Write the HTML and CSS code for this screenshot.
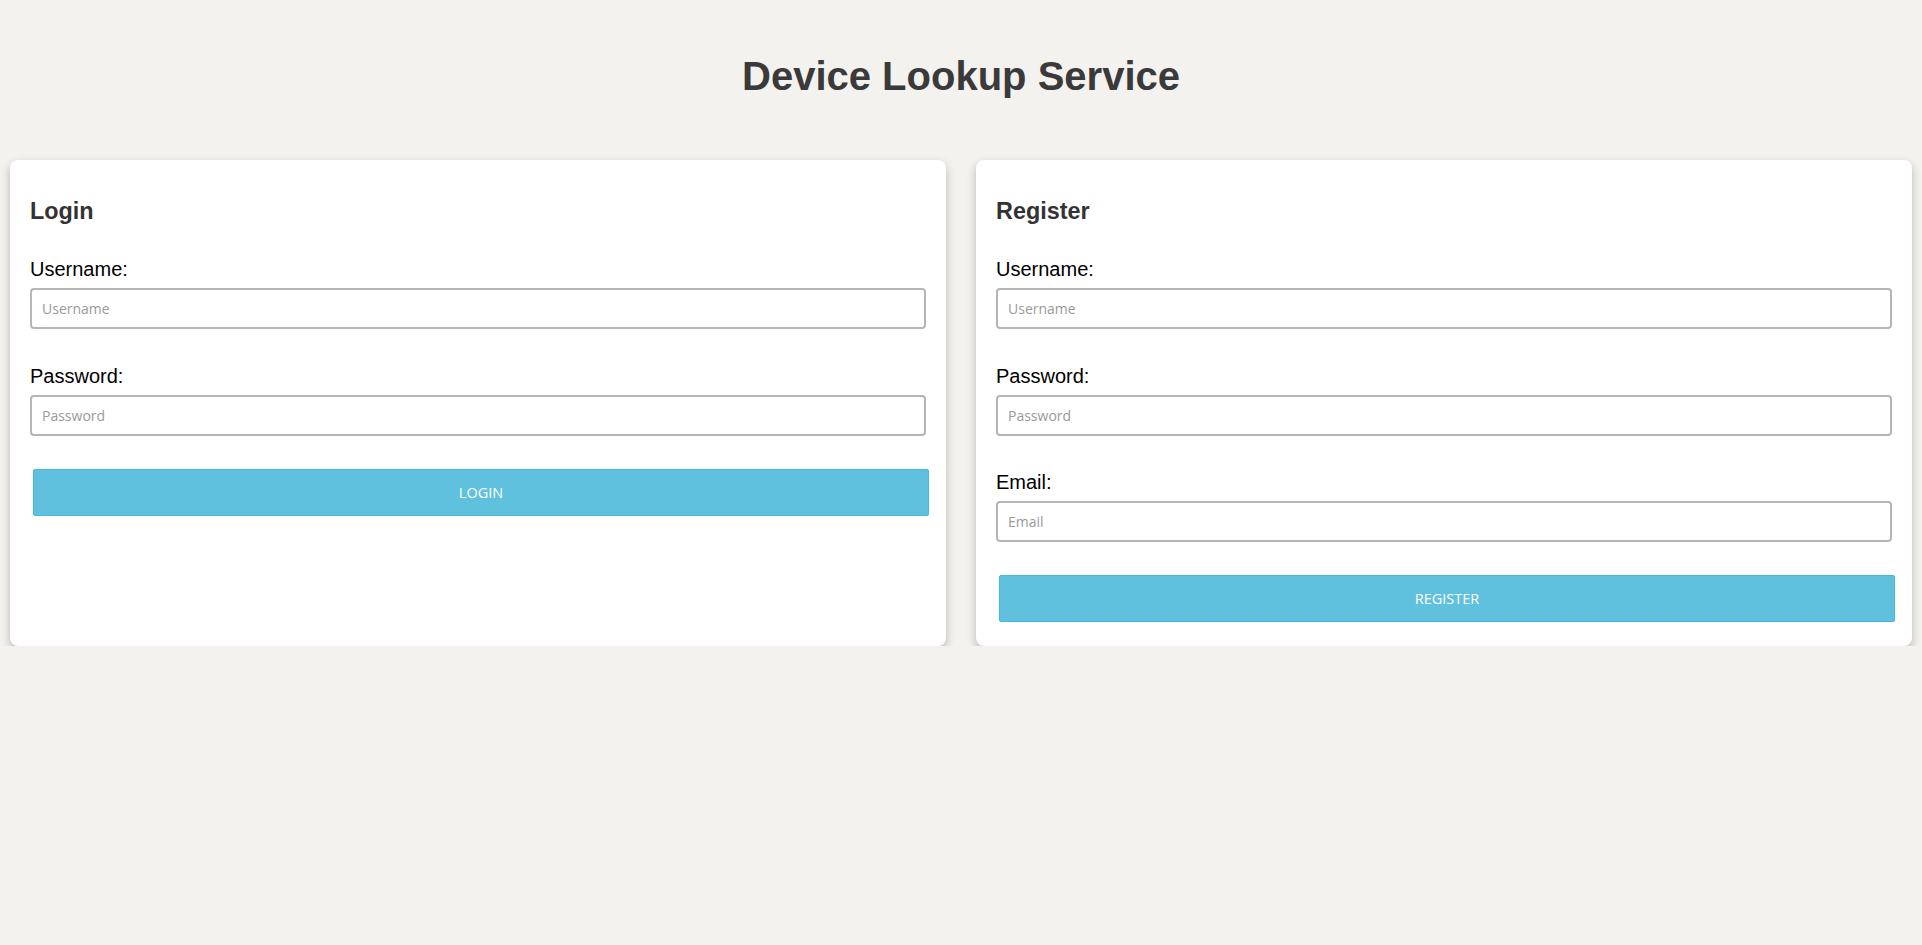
FILE: index.html
```html
<!DOCTYPE html>
<html lang="en">
<head>
<meta charset="utf-8">
<title>Device Lookup Service</title>
<link rel="stylesheet" href="styles.css">
</head>
<body>
<h1 class="page-title">Device Lookup Service</h1>
<main class="panels">
  <section class="card">
    <h3 class="card-title">Login</h3>
    <form class="form">
      <div class="field">
        <label class="field-label" for="lu">Username:</label>
        <input class="field-input" id="lu" type="text" placeholder="Username">
      </div>
      <div class="field">
        <label class="field-label" for="lp">Password:</label>
        <input class="field-input" id="lp" type="password" placeholder="Password">
      </div>
      <button class="btn" type="button">LOGIN</button>
    </form>
  </section>
  <section class="card">
    <h3 class="card-title">Register</h3>
    <form class="form">
      <div class="field">
        <label class="field-label" for="ru">Username:</label>
        <input class="field-input" id="ru" type="text" placeholder="Username">
      </div>
      <div class="field">
        <label class="field-label" for="rp">Password:</label>
        <input class="field-input" id="rp" type="password" placeholder="Password">
      </div>
      <div class="field">
        <label class="field-label" for="re">Email:</label>
        <input class="field-input" id="re" type="email" placeholder="Email">
      </div>
      <button class="btn" type="button">REGISTER</button>
    </form>
  </section>
</main>
</body>
</html>
```
FILE: styles.css
```css
html, body {
  margin: 0;
  padding: 0;
}

body {
  background: #f4f2ee;
  font-family: "Liberation Sans", Arial, sans-serif;
  color: #000;
}

.page-title {
  margin: 53px 0 61px;
  font-size: 40px;
  line-height: 46px;
  font-weight: bold;
  text-align: center;
  color: #3a3a3a;
}

.panels {
  display: flex;
  gap: 30px;
  padding: 0 10px;
  align-items: stretch;
}

.card {
  flex: 1 1 0;
  background: #fff;
  border-radius: 8px;
  padding: 20px;
  box-shadow: 0 4px 10px rgba(0, 0, 0, 0.25);
}

.card-title {
  margin: 18.4px 0 30.5px;
  font-size: 23.4px;
  line-height: 27px;
  font-weight: bold;
  color: #333;
}

.form {
  display: flex;
  flex-direction: column;
  margin: 0;
}

.field {
  display: flex;
  flex-direction: column;
  margin-bottom: 33px;
}

.field-label {
  margin-top: 2.5px;
  margin-bottom: 7px;
  font-size: 20px;
  line-height: 23px;
  color: #000;
}

.field-input {
  box-sizing: border-box;
  width: 100%;
  height: 41px;
  margin: 0;
  padding: 0 10px;
  border: 2px solid #b5b5b5;
  border-radius: 4px;
  background: #fff;
  font-family: "Open Sans", sans-serif;
  font-size: 14px;
  color: #333;
  outline: none;
}

.field-input::placeholder {
  color: #9a9a9a;
}

.btn {
  box-sizing: border-box;
  width: 100%;
  height: 47px;
  margin: 0 0 4px 3px;
  padding: 0;
  background: #5fc1dd;
  border: 1px solid #46b8da;
  border-radius: 2px;
  color: #fff;
  font-family: "Open Sans", sans-serif;
  font-size: 14.5px;
  cursor: pointer;
}
```
